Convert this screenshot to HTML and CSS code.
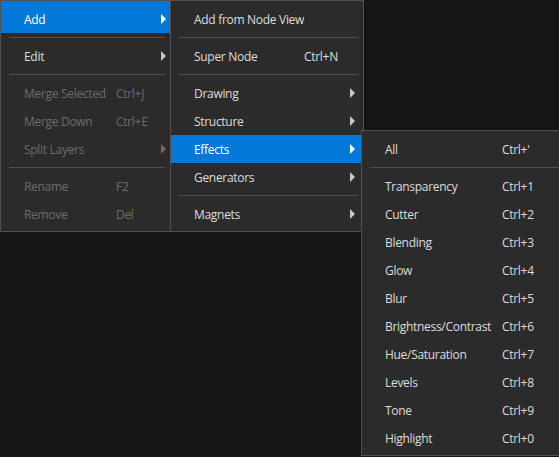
FILE: index.html
```html
<!DOCTYPE html>
<html>
<head>
<meta charset="utf-8">
<link rel="stylesheet" href="styles.css">
</head>
<body>
<div class="menu menu-main">
  <div class="item first active"><span class="label">Add</span><span class="key"></span><span class="arrow"></span></div>
  <div class="sep"></div>
  <div class="item"><span class="label">Edit</span><span class="key"></span><span class="arrow"></span></div>
  <div class="sep"></div>
  <div class="item disabled"><span class="label">Merge Selected</span><span class="key">Ctrl+J</span></div>
  <div class="item disabled"><span class="label">Merge Down</span><span class="key">Ctrl+E</span></div>
  <div class="item disabled"><span class="label">Split Layers</span><span class="key"></span><span class="arrow"></span></div>
  <div class="sep"></div>
  <div class="item disabled"><span class="label">Rename</span><span class="key">F2</span></div>
  <div class="item disabled"><span class="label">Remove</span><span class="key">Del</span></div>
</div>

<div class="menu menu-add">
  <div class="item first"><span class="label">Add from Node View</span></div>
  <div class="sep"></div>
  <div class="item"><span class="label">Super Node</span><span class="key">Ctrl+N</span></div>
  <div class="sep"></div>
  <div class="item"><span class="label">Drawing</span><span class="key"></span><span class="arrow"></span></div>
  <div class="item"><span class="label">Structure</span><span class="key"></span><span class="arrow"></span></div>
  <div class="item active"><span class="label">Effects</span><span class="key"></span><span class="arrow"></span></div>
  <div class="item"><span class="label">Generators</span><span class="key"></span><span class="arrow"></span></div>
  <div class="sep"></div>
  <div class="item"><span class="label">Magnets</span><span class="key"></span><span class="arrow"></span></div>
</div>

<div class="menu menu-effects">
  <div class="item first"><span class="label">All</span><span class="key">Ctrl+'</span></div>
  <div class="sep"></div>
  <div class="item"><span class="label">Transparency</span><span class="key">Ctrl+1</span></div>
  <div class="item"><span class="label">Cutter</span><span class="key">Ctrl+2</span></div>
  <div class="item"><span class="label">Blending</span><span class="key">Ctrl+3</span></div>
  <div class="item"><span class="label">Glow</span><span class="key">Ctrl+4</span></div>
  <div class="item"><span class="label">Blur</span><span class="key">Ctrl+5</span></div>
  <div class="item"><span class="label">Brightness/Contrast</span><span class="key">Ctrl+6</span></div>
  <div class="item"><span class="label">Hue/Saturation</span><span class="key">Ctrl+7</span></div>
  <div class="item"><span class="label">Levels</span><span class="key">Ctrl+8</span></div>
  <div class="item"><span class="label">Tone</span><span class="key">Ctrl+9</span></div>
  <div class="item"><span class="label">Highlight</span><span class="key">Ctrl+0</span></div>
</div>
</body>
</html>
```

FILE: styles.css
```css
html, body {
  margin: 0;
  padding: 0;
  width: 559px;
  height: 457px;
  overflow: hidden;
  background: #141414;
  font-family: "Segoe UI", "Open Sans", "Noto Sans", sans-serif;
  font-size: 12px;
  letter-spacing: -0.3px;
}
body { position: relative; }

.menu {
  position: absolute;
  box-sizing: border-box;
  background: #2b2b2b;
  border: 1px solid #505050;
  padding: 0 0 3px 0;
  color: #dedede;
}
.menu-main { left: 0; top: 0; width: 171px; }
.menu-add { left: 170px; top: 0; width: 194px; }
.menu-effects { left: 361px; top: 130px; width: 210px; }

.item {
  display: flex;
  align-items: center;
  height: 28px;
  padding-left: 23px;
  position: relative;
  white-space: nowrap;
}
.item.first { height: 32px; padding-top: 4px; box-sizing: border-box; }
.item.active { background: #0078d7; color: #ffffff; }
.item.disabled { color: #6c6c6c; }

.label { flex: none; }
.menu-main .label { width: 92px; }
.menu-add .label { width: 110px; }
.menu-effects .label { width: 117px; }

.arrow {
  position: absolute;
  top: 50%;
  margin-top: -5px;
  width: 0;
  height: 0;
  border-top: 5px solid transparent;
  border-bottom: 5px solid transparent;
  border-left: 5px solid #c8c8c8;
}
.item.first .arrow { margin-top: -3px; }
.menu-main .arrow { right: 4px; }
.menu-add .arrow { right: 8px; }
.item.active .arrow { border-left-color: #ffffff; }
.item.disabled .arrow { border-left-color: #6c6c6c; }

.sep {
  height: 1px;
  background: #4f4f4f;
  margin: 4px 5px 4px 8px;
}
```
